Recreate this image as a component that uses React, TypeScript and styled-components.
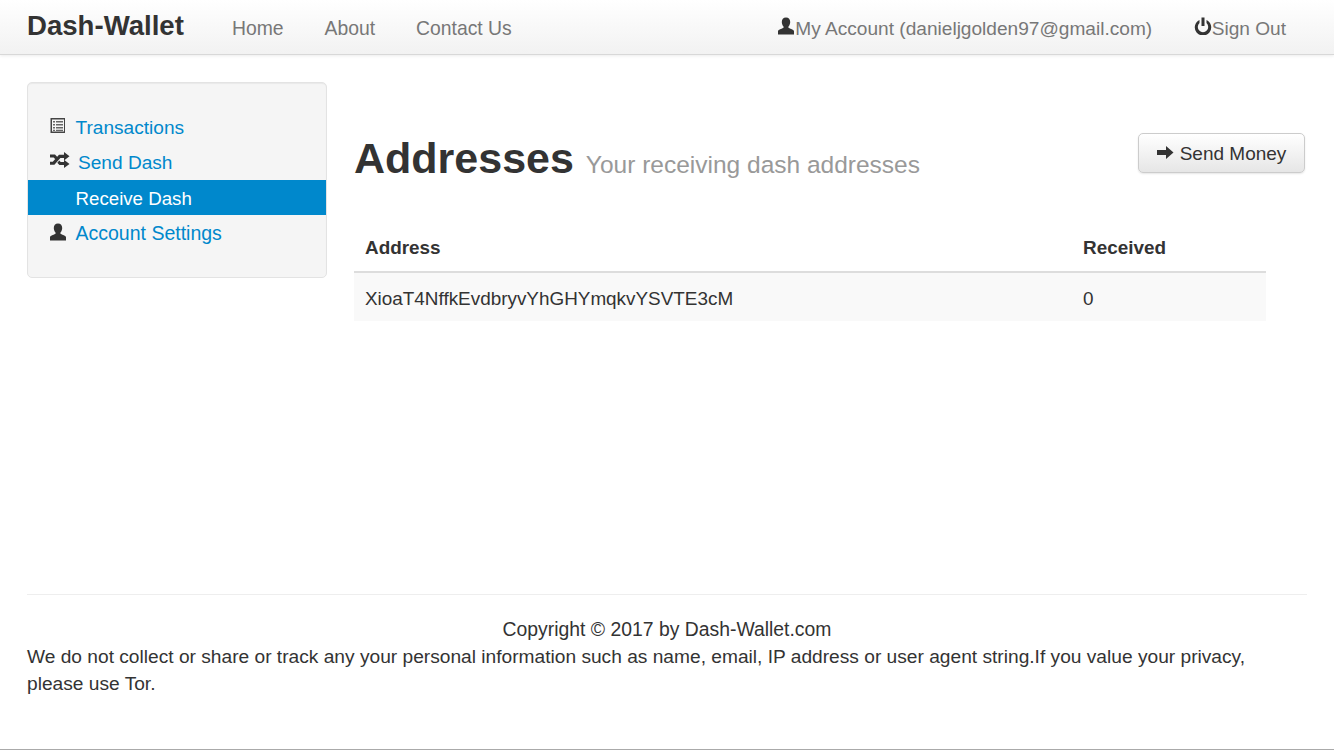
import React from "react";
import styled, { createGlobalStyle } from "styled-components";

const GlobalStyle = createGlobalStyle`
  html, body { margin: 0; padding: 0; background: #fff; }
  body {
    font-family: "Liberation Sans", Arial, sans-serif;
    font-size: 19.1px;
    color: #333;
  }
`;

const Page = styled.div`
  height: 750px;
  box-sizing: border-box;
  border-bottom: 1px solid #aaa;
  overflow: hidden;
`;

const Navbar = styled.nav`
  display: flex;
  align-items: center;
  height: 51px;
  padding: 3px 48px 0 27px;
  background: linear-gradient(to bottom, #ffffff, #f2f2f2);
  border-bottom: 1px solid #d8d8d8;
  box-shadow: 0 1px 3px rgba(0, 0, 0, 0.08);
`;

const Brand = styled.a`
  font-size: 27.6px;
  font-weight: bold;
  color: #333;
  margin-right: 48px;
  position: relative;
  top: -3px;
`;

const NavLink = styled.a<{ $gap?: number; $size?: number }>`
  display: flex;
  align-items: center;
  color: #777;
  font-size: ${(p) => p.$size ?? 19.35}px;
  margin-right: ${(p) => p.$gap ?? 41}px;
  svg { margin-top: -5px; fill: #333; }
`;

const NavSpacer = styled.div`
  flex: 1;
`;

const Content = styled.div`
  display: flex;
  padding: 27px 28px 0 27px;
  height: 539px;
  box-sizing: border-box;
`;

const Sidebar = styled.ul`
  list-style: none;
  width: 300px;
  height: 196px;
  box-sizing: border-box;
  margin: 0 27px 0 0;
  padding: 26.4px 0 0;
  background: #f5f5f5;
  border: 1.33px solid #e3e3e3;
  border-radius: 5px;
  box-shadow: inset 0 1px 1px rgba(0, 0, 0, 0.05);
  flex-shrink: 0;
`;

const SideItem = styled.li<{ $active?: boolean; $indent?: number; $size?: number }>`
  display: flex;
  align-items: center;
  height: 35.3px;
  box-sizing: border-box;
  padding: 2px 0 0 ${(p) => p.$indent ?? 47.5}px;
  position: relative;
  font-size: ${(p) => p.$size ?? 19.1}px;
  color: ${(p) => (p.$active ? "#fff" : "#0088cc")};
  background: ${(p) => (p.$active ? "#0088cc" : "transparent")};
  svg {
    position: absolute;
    left: 21px;
    top: 50%;
    transform: translateY(-10px);
    fill: #333;
  }
`;

const Main = styled.main`
  flex: 1;
  min-width: 0;
`;

const Header = styled.header`
  display: flex;
  justify-content: space-between;
  align-items: flex-start;
  padding-top: 24px;
  height: 136px;
  box-sizing: border-box;
`;

const Title = styled.h1`
  margin: 0;
  padding-top: 27px;
  font-size: 43px;
  line-height: 50px;
  font-weight: bold;
  color: #333;
  small {
    font-size: 24.5px;
    font-weight: normal;
    color: #999;
  }
`;

const SendButton = styled.button`
  display: flex;
  align-items: center;
  justify-content: center;
  gap: 6px;
  width: 167px;
  height: 40px;
  margin: 27px 1px 0 0;
  padding: 2px 0 0;
  font-family: inherit;
  font-size: 19px;
  color: #333;
  background: linear-gradient(to bottom, #fff, #e6e6e6);
  border: 1px solid #ccc;
  border-radius: 5px;
  box-shadow: 0 1px 2px rgba(0, 0, 0, 0.1);
  svg { fill: #333; margin-top: -4px; }
`;

const Table = styled.table`
  width: 912px;
  border-collapse: collapse;
  font-size: 18.9px;
  th, td {
    text-align: left;
    padding: 0 11px;
    box-sizing: border-box;
  }
  th {
    height: 54px;
    font-weight: bold;
    border-bottom: 2px solid #ddd;
    padding-top: 7px;
  }
  td {
    height: 49px;
    background: #f9f9f9;
    padding-top: 3px;
  }
`;

const AddressCol = styled.th`
  width: 718px;
`;

const Footer = styled.footer`
  margin: 0 27px;
  border-top: 1px solid #eee;
  padding-top: 20.6px;
  line-height: 27.5px;
  font-size: 19.17px;
`;

const Copyright = styled.div`
  text-align: center;
  font-size: 19.37px;
  line-height: 27px;
`;

const Notice = styled.p`
  margin: 0;
  padding-right: 50px;
`;

const IconList = () => (
  <svg width="16" height="16" viewBox="-1 0 16 16">
    <path fill="#444" fillRule="evenodd" d="M.5 1h15v15H.5zM2 2.500V14.500H14V2.500z" />
    <path fill="#666" d="M3 4h2v1.500H3zM6 4h7v1.500H6zM3 7h2v1.500H3zM6 7h7v1.500H6zM3 10h2v1.500H3zM6 10h7v1.500H6zM3 12.700h2v1.300H3zM6 12.700h7v1.300H6z" />
  </svg>
);

const IconShuffle = () => (
  <svg width="21" height="16" viewBox="-1 0 21 16">
    <path d="M0 2.500h5l2.800 3-2 2.200-2.200-2.200H0zM0 9.800h2.800L9 2.800h5V0l5.500 4.300L14 8.500V6h-3.600l-6 6.800H0zM9.300 8.400l1.400 1.600H14V7.700l5.500 4.200L14 16v-2.900H9.400L7.300 10.700z" />
  </svg>
);

const IconUser = ({ size = 18 }: { size?: number }) => (
  <svg width={size} height={size} viewBox="0 0 18 18">
    <path d="M9 .5c2.800 0 4.200 2 4.200 4.600 0 1.900-.8 3.500-1.700 4.500-.3.4-.2 1 .3 1.300 1.900.9 5.200 1.800 5.200 3.400V17.500H1v-3.200c0-1.600 3.300-2.500 5.200-3.400.5-.3.600-.9.300-1.300C5.600 8.600 4.800 7 4.800 5.100 4.800 2.500 6.200.5 9 .5z" />
  </svg>
);

const IconPower = () => (
  <svg width="18" height="18" viewBox="0 0 18 18">
    <path d="M7.500.5h3v8.500h-3zM5.500 2.900v3.200a5.200 5.200 0 1 0 7 0V2.900a8.200 8.200 0 1 1-7 0z" />
  </svg>
);

const IconArrow = () => (
  <svg width="17" height="15" viewBox="0 0 17 15">
    <path d="M0 5h9V1l7.500 6.500L9 14V10H0z" />
  </svg>
);

export default function App() {
  return (
    <Page>
      <GlobalStyle />
      <Navbar>
        <Brand>Dash-Wallet</Brand>
        <NavLink>Home</NavLink>
        <NavLink>About</NavLink>
        <NavLink>Contact Us</NavLink>
        <NavSpacer />
        <NavLink $gap={41.5} $size={19.1}>
          <IconUser />
          My Account (danieljgolden97@gmail.com)
        </NavLink>
        <NavLink $gap={0} $size={19.1}>
          <IconPower />
          Sign Out
        </NavLink>
      </Navbar>
      <Content>
        <Sidebar>
          <SideItem>
            <IconList />
            Transactions
          </SideItem>
          <SideItem $indent={50}>
            <IconShuffle />
            Send Dash
          </SideItem>
          <SideItem $active $size={18.7}>Receive Dash</SideItem>
          <SideItem $size={19.5}>
            <IconUser />
            Account Settings
          </SideItem>
        </Sidebar>
        <Main>
          <Header>
            <Title>
              Addresses <small>Your receiving dash addresses</small>
            </Title>
            <SendButton>
              <IconArrow />
              Send Money
            </SendButton>
          </Header>
          <Table>
            <thead>
              <tr>
                <AddressCol>Address</AddressCol>
                <th>Received</th>
              </tr>
            </thead>
            <tbody>
              <tr>
                <td>XioaT4NffkEvdbryvYhGHYmqkvYSVTE3cM</td>
                <td>0</td>
              </tr>
            </tbody>
          </Table>
        </Main>
      </Content>
      <Footer>
        <Copyright>Copyright © 2017 by Dash-Wallet.com</Copyright>
        <Notice>
          We do not collect or share or track any your personal information such as name, email, IP address or user agent string.If you value your privacy, please use Tor.
        </Notice>
      </Footer>
    </Page>
  );
}
